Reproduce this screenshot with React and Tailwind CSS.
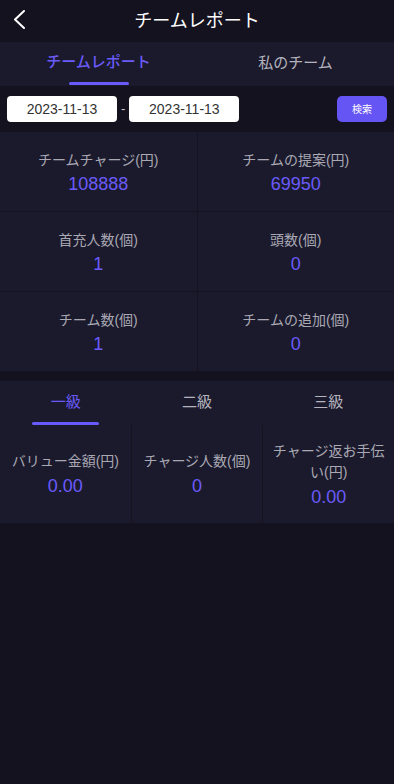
const stats = [
  { label: 'チームチャージ(円)', value: '108888' },
  { label: 'チームの提案(円)', value: '69950' },
  { label: '首充人数(個)', value: '1' },
  { label: '頭数(個)', value: '0' },
  { label: 'チーム数(個)', value: '1' },
  { label: 'チームの追加(個)', value: '0' },
]

const levelStats = [
  { label: 'バリュー金額(円)', value: '0.00' },
  { label: 'チャージ人数(個)', value: '0' },
  { label: 'チャージ返お手伝い(円)', value: '0.00' },
]

export default function App() {
  return (
    <div
      className="min-h-[784px] bg-[#14121f] text-white"
      style={{ fontFamily: '"Liberation Sans", "Noto Sans CJK JP", sans-serif' }}
    >
      {/* ヘッダー */}
      <div className="relative flex h-[42px] items-center justify-center">
        <svg className="absolute left-[13px] top-[10px]" width="12" height="19" viewBox="0 0 12 19" fill="none">
          <polyline points="11,1 2,9.5 11,18" stroke="white" strokeWidth="2" strokeLinecap="round" strokeLinejoin="round" />
        </svg>
        <h1 className="text-[18px] font-normal">チームレポート</h1>
      </div>

      {/* タブ */}
      <div className="flex h-[44px] bg-[#1b1a2d]">
        <div className="flex flex-1 flex-col items-center justify-end">
          <span className="text-[15px] font-medium text-[#6a5af9]">チームレポート</span>
          <div className="mt-[9px] mb-[1px] h-[3px] w-[60px] rounded-full bg-[#6a5af9]" />
        </div>
        <div className="flex flex-1 items-center justify-center pb-[2px]">
          <span className="text-[15px] text-[#b4b3bd]">私のチーム</span>
        </div>
      </div>

      {/* 日付 */}
      <div className="flex h-[46px] items-center px-[7px]">
        <div className="flex h-[26px] w-[110px] items-center justify-center rounded-[4px] bg-white text-[14px] text-[#333]">
          2023-11-13
        </div>
        <span className="mx-[4px] text-[13px] text-[#ccc]">-</span>
        <div className="flex h-[26px] w-[110px] items-center justify-center rounded-[4px] bg-white text-[14px] text-[#333]">
          2023-11-13
        </div>
        <button className="ml-auto flex h-[26px] w-[50px] items-center justify-center rounded-[5px] bg-[#6655f5] text-[10px] text-white">
          検索
        </button>
      </div>

      {/* 統計 */}
      <div className="grid grid-cols-2 gap-px bg-[#15131f]">
        {stats.map((s) => (
          <div key={s.label} className="flex h-[79px] flex-col items-center justify-center bg-[#1b1a2d]">
            <span className="text-[14px] leading-[20px] text-[#a9a8b3]">{s.label}</span>
            <span className="mt-[4px] text-[18px] leading-[20px] text-[#6a5af9]">{s.value}</span>
          </div>
        ))}
      </div>

      <div className="h-[10px]" />

      {/* 級 */}
      <div className="bg-[#1b1a2d]">
        <div className="flex h-[44px]">
          <div className="flex flex-1 flex-col items-center justify-end">
            <span className="text-[15px] text-[#6a5af9]">一級</span>
            <div className="mt-[9px] h-[3px] w-[67px] rounded-full bg-[#6a5af9]" />
          </div>
          <div className="flex flex-1 items-center justify-center pb-[2px]">
            <span className="text-[15px] text-[#b4b3bd]">二級</span>
          </div>
          <div className="flex flex-1 items-center justify-center pb-[2px]">
            <span className="text-[15px] text-[#b4b3bd]">三級</span>
          </div>
        </div>
        <div className="grid grid-cols-3 gap-px bg-[#15131f]">
          {levelStats.map((s) => (
            <div key={s.label} className="flex h-[98px] flex-col items-center justify-center bg-[#1b1a2d] px-[8px] text-center">
              <span className="text-[14px] leading-[21px] text-[#a9a8b3]">{s.label}</span>
              <span className="mt-[4px] text-[18px] leading-[21px] text-[#6a5af9]">{s.value}</span>
            </div>
          ))}
        </div>
      </div>
    </div>
  )
}
